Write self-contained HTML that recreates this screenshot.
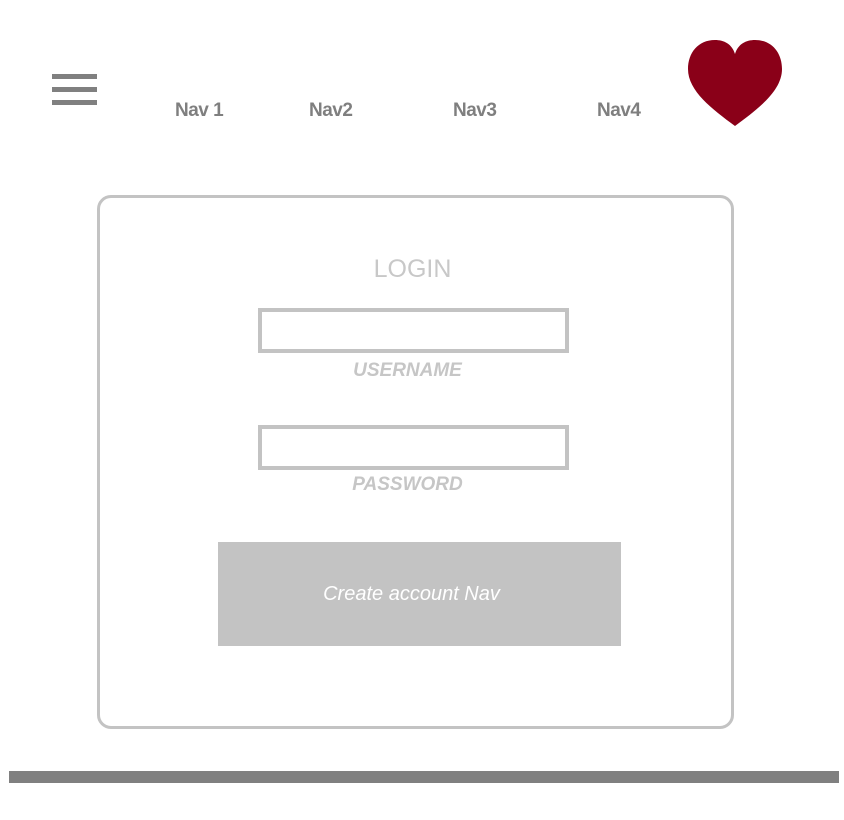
<!DOCTYPE html>
<html><head><style>
body{margin:0;width:844px;height:820px;background:#fff;position:relative;overflow:hidden;font-family:"Liberation Sans",sans-serif}
.a{position:absolute}
.bar{left:52px;width:45px;height:5px;background:#808080}
.nav{top:100px;font-size:19px;font-weight:bold;color:#7f7f7f;letter-spacing:-0.5px}
.in{left:258px;width:303px;height:37px;border:4px solid #c3c3c3}
.lbl{left:258px;width:311px;text-align:center;font-size:19px;font-weight:bold;font-style:italic;color:#c6c6c6;padding-right:12px;box-sizing:border-box}
</style></head><body>
<div class="a bar" style="top:74px"></div>
<div class="a bar" style="top:87px"></div>
<div class="a bar" style="top:100px"></div>
<div class="a nav" style="left:175px">Nav 1</div>
<div class="a nav" style="left:309px">Nav2</div>
<div class="a nav" style="left:453px">Nav3</div>
<div class="a nav" style="left:597px">Nav4</div>
<svg class="a" style="left:686px;top:39px" width="98" height="89" viewBox="0 0 98 89">
<path d="M49 15 C46 5 38 1 29 1 C12 1 2 14 2 30 C2 52 26 70 49 87 C72 70 96 52 96 30 C96 14 86 1 69 1 C60 1 52 5 49 15Z" fill="#8a0018"/>
</svg>
<div class="a" style="left:97px;top:195px;width:631px;height:528px;border:3px solid #c3c3c3;border-radius:14px"></div>
<div class="a" style="left:97px;width:637px;top:255px;text-align:center;font-size:25px;color:#c8c8c8;padding-right:6px;box-sizing:border-box">LOGIN</div>
<div class="a in" style="top:308px"></div>
<div class="a lbl" style="top:360px">USERNAME</div>
<div class="a in" style="top:425px"></div>
<div class="a lbl" style="top:474px">PASSWORD</div>
<div class="a" style="left:218px;top:542px;width:387px;padding-right:16px;height:104px;background:#c3c3c3;color:#fff;font-style:italic;font-size:20px;text-align:center;line-height:104px">Create account Nav</div>
<div class="a" style="left:9px;top:771px;width:830px;height:12px;background:#808080"></div>
</body></html>
